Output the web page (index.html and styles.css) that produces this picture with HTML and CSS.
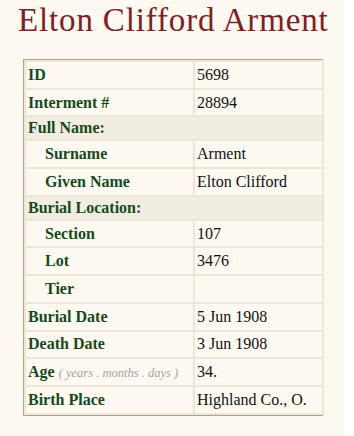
FILE: index.html
```html
<!DOCTYPE html>
<html>
<head>
<meta charset="utf-8">
<link rel="stylesheet" href="styles.css">
</head>
<body>
<div class="page">
  <h1 class="title">Elton Clifford Arment</h1>
  <div class="frame">
  <table class="record">
    <colgroup><col class="c-label"><col class="c-value"></colgroup>
    <tr><th>ID</th><td>5698</td></tr>
    <tr><th>Interment #</th><td>28894</td></tr>
    <tr class="group"><th colspan="2">Full Name:</th></tr>
    <tr><th class="sub">Surname</th><td>Arment</td></tr>
    <tr><th class="sub">Given Name</th><td>Elton Clifford</td></tr>
    <tr class="group"><th colspan="2">Burial Location:</th></tr>
    <tr><th class="sub">Section</th><td>107</td></tr>
    <tr><th class="sub">Lot</th><td>3476</td></tr>
    <tr><th class="sub">Tier</th><td></td></tr>
    <tr><th>Burial Date</th><td>5 Jun 1908</td></tr>
    <tr><th>Death Date</th><td>3 Jun 1908</td></tr>
    <tr><th>Age <span class="hint">( years . months . days )</span></th><td>34.</td></tr>
    <tr><th>Birth Place</th><td>Highland Co., O.</td></tr>
  </table>
  </div>
</div>
</body>
</html>
```
FILE: styles.css
```css
html, body {
  margin: 0;
  padding: 0;
  background: #ffffff;
}
.page {
  width: 344px;
  height: 436px;
  background: #fdf9f1;
  font-family: "Liberation Serif", "Times New Roman", serif;
  padding-top: 1px;
  box-sizing: border-box;
}
.title {
  margin: 0 0 0 18px;
  font-weight: normal;
  font-size: 33px;
  line-height: 38px;
  color: #7b2226;
  letter-spacing: 0.85px;
  white-space: nowrap;
}
.frame {
  margin: 20px 0 0 23px;
  width: 298px;
  border: 1px solid #b3a487;
}
.record {
  width: 298px;
  table-layout: fixed;
  border-collapse: collapse;
  font-size: 16px;
}
.c-label { width: 169px; }
.c-value { width: 129px; }
.record th, .record td {
  border: 2px solid #ece6da;
  height: 27.7px;
  box-sizing: border-box;
  padding: 0 2px;
  text-align: left;
  vertical-align: middle;
  white-space: nowrap;
}
.record th {
  color: #154a1c;
  font-weight: bold;
}
.record td {
  color: #111111;
}
.record th.sub {
  padding-left: 19px;
}
.record tr.group th {
  background: #f2ede2;
  height: 24px;
}
.hint {
  font-weight: normal;
  font-style: italic;
  font-size: 12.5px;
  color: #a3a3a3;
}
```
